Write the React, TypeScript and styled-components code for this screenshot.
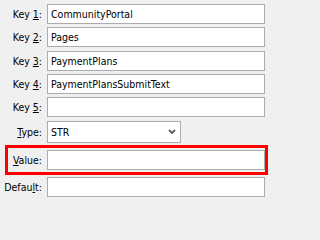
import { createGlobalStyle, styled } from "styled-components";

const Global = createGlobalStyle`
  html, body {
    margin: 0;
    padding: 0;
    background: #f0f0f0;
  }
  body {
    font-family: Tahoma, "DejaVu Sans Condensed", "DejaVu Sans", sans-serif;
    font-stretch: condensed;
    font-size: 10.5px;
    color: #000;
  }
`;

const keys = [
  { n: "1", value: "CommunityPortal" },
  { n: "2", value: "Pages" },
  { n: "3", value: "PaymentPlans" },
  { n: "4", value: "PaymentPlansSubmitText" },
  { n: "5", value: "" },
];

export default function App() {
  return (
    <>
      <Global />
      <Form>
        {keys.map((k) => (
          <Row key={k.n}>
            <Label>
              Key <U>{k.n}</U>:
            </Label>
            <Field defaultValue={k.value} />
          </Row>
        ))}
        <Row>
          <Label>
            <U>T</U>ype:
          </Label>
          <Select>
            <span>STR</span>
            <svg width="8" height="6" viewBox="0 0 8 6">
              <path d="M1 1 L4 4 L7 1" fill="none" stroke="#5a5a5a" strokeWidth="1.8" />
            </svg>
          </Select>
        </Row>
        <Highlight>
          <Row $inset>
            <Label>
              <U>V</U>alue:
            </Label>
            <Field defaultValue="" />
          </Row>
        </Highlight>
        <Row>
          <Label>
            Defau<U>l</U>t:
          </Label>
          <Field defaultValue="" />
        </Row>
      </Form>
    </>
  );
}

const Form = styled.div`
  display: flex;
  flex-direction: column;
  gap: 3.35px;
  padding-top: 4px;
  width: 270px;
`;

const Row = styled.div<{ $inset?: boolean }>`
  display: grid;
  grid-template-columns: 42px 218px;
  column-gap: 5px;
  align-items: center;
  margin-left: ${(p) => (p.$inset ? "-8px" : "0")};
`;

const Label = styled.label`
  text-align: right;
  white-space: nowrap;
`;

const U = styled.span`
  text-decoration: underline;
`;

const Field = styled.input`
  box-sizing: border-box;
  height: 20px;
  width: 218px;
  border: 1px solid #acacac;
  background: #fff;
  padding: 0 3px;
  font: inherit;
  color: #000;
  outline: none;
`;

const Select = styled.div`
  box-sizing: border-box;
  height: 22px;
  width: 134px;
  border: 1px solid #acacac;
  background: #fff;
  padding: 0 4px 0 3px;
  display: flex;
  align-items: center;
  justify-content: space-between;
`;

const Highlight = styled.div`
  margin: -1.35px 2px -1.35px 5px;
  border: 3px solid #ff0000;
  padding: 2px 0;
`;
